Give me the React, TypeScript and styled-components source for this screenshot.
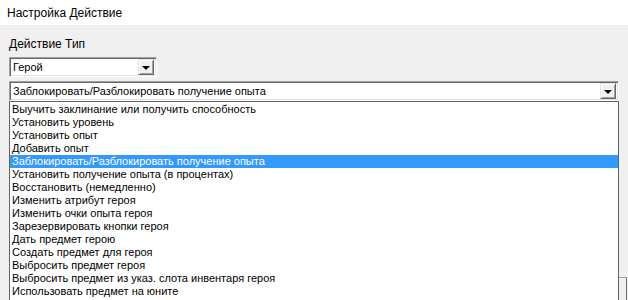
import * as React from 'react';
import styled, { createGlobalStyle } from 'styled-components';

const GlobalStyle = createGlobalStyle`
  html, body {
    margin: 0;
    padding: 0;
    background: #f0f0f0;
  }
  body {
    font-family: "Liberation Sans", Arial, sans-serif;
    color: #000;
  }
`;

const Window = styled.div`
  width: 628px;
  height: 300px;
  overflow: hidden;
  position: relative;
  background: #f0f0f0;
`;

const TitleBar = styled.div`
  height: 25px;
  background: #fff;
  display: flex;
  align-items: center;
  padding-left: 7px;
  font-size: 12px;
`;

const Body = styled.div`
  padding: 12px 9px 0 9px;
  display: flex;
  flex-direction: column;
`;

const FieldLabel = styled.div`
  font-size: 12px;
  height: 14px;
  line-height: 14px;
  margin-bottom: 6px;
`;

const Combo = styled.div<{ $width?: number }>`
  box-sizing: border-box;
  width: ${(p) => (p.$width ? `${p.$width}px` : '100%')};
  height: 20px;
  background: #fff;
  display: flex;
  align-items: center;
  justify-content: space-between;
  border-style: solid;
  border-width: 1px;
  border-color: #a0a0a0 #ffffff #ffffff #a0a0a0;
  box-shadow: inset 1px 1px 0 #696969, inset -1px -1px 0 #e3e3e3;
  padding: 0 2px 0 3px;
  font-size: 11px;
`;

const ComboText = styled.span`
  line-height: 14px;
`;

const DropButton = styled.div`
  box-sizing: border-box;
  width: 16px;
  height: 16px;
  background: #f0f0f0;
  border-style: solid;
  border-width: 1px;
  border-color: #e3e3e3 #696969 #696969 #e3e3e3;
  box-shadow: inset 1px 1px 0 #ffffff, inset -1px -1px 0 #a0a0a0;
  display: flex;
  align-items: center;
  justify-content: center;
`;

const Arrow = styled.span`
  width: 0;
  height: 0;
  border-left: 4px solid transparent;
  border-right: 4px solid transparent;
  border-top: 4px solid #000;
  margin-top: 1px;
`;

const Gap = styled.div`
  height: 4px;
`;

const Popup = styled.ul`
  box-sizing: border-box;
  width: 610px;
  margin: 0;
  padding: 1px 0 0 0;
  list-style: none;
  background: #fff;
  border: 1px solid #646464;
  border-right-width: 1px;
  position: relative;
  z-index: 2;
`;

const Item = styled.li<{ $selected?: boolean }>`
  height: 13px;
  line-height: 13px;
  font-size: 11px;
  padding-left: 2px;
  white-space: nowrap;
  background: ${(p) => (p.$selected ? '#3399ff' : 'transparent')};
  color: ${(p) => (p.$selected ? '#fff' : '#000')};
`;

const HiddenControl = styled.div`
  position: absolute;
  left: 618px;
  top: 277px;
  width: 9px;
  height: 30px;
  box-sizing: border-box;
  border: 1px solid #a0a0a0;
  border-right-color: #696969;
  border-bottom-color: #696969;
  background: #f0f0f0;
  z-index: 1;
`;

const actions = [
  'Выучить заклинание или получить способность',
  'Установить уровень',
  'Установить опыт',
  'Добавить опыт',
  'Заблокировать/Разблокировать получение опыта',
  'Установить получение опыта (в процентах)',
  'Восстановить (немедленно)',
  'Изменить атрибут героя',
  'Изменить очки опыта героя',
  'Зарезервировать кнопки героя',
  'Дать предмет герою',
  'Создать предмет для героя',
  'Выбросить предмет героя',
  'Выбросить предмет из указ. слота инвентаря героя',
  'Использовать предмет на юните',
  'Использовать предмет на точке',
];

const selectedIndex = 4;

const App = (): React.ReactElement => (
  <Window>
    <GlobalStyle />
    <TitleBar>Настройка Действие</TitleBar>
    <Body>
      <FieldLabel>Действие Тип</FieldLabel>
      <Combo $width={148}>
        <ComboText>Герой</ComboText>
        <DropButton>
          <Arrow />
        </DropButton>
      </Combo>
      <Gap />
      <Combo $width={610}>
        <ComboText>{actions[selectedIndex]}</ComboText>
        <DropButton>
          <Arrow />
        </DropButton>
      </Combo>
      <Popup>
        {actions.map((a, i) => (
          <Item key={a} $selected={i === selectedIndex}>
            {a}
          </Item>
        ))}
      </Popup>
    </Body>
    <HiddenControl />
  </Window>
);

export default App;
